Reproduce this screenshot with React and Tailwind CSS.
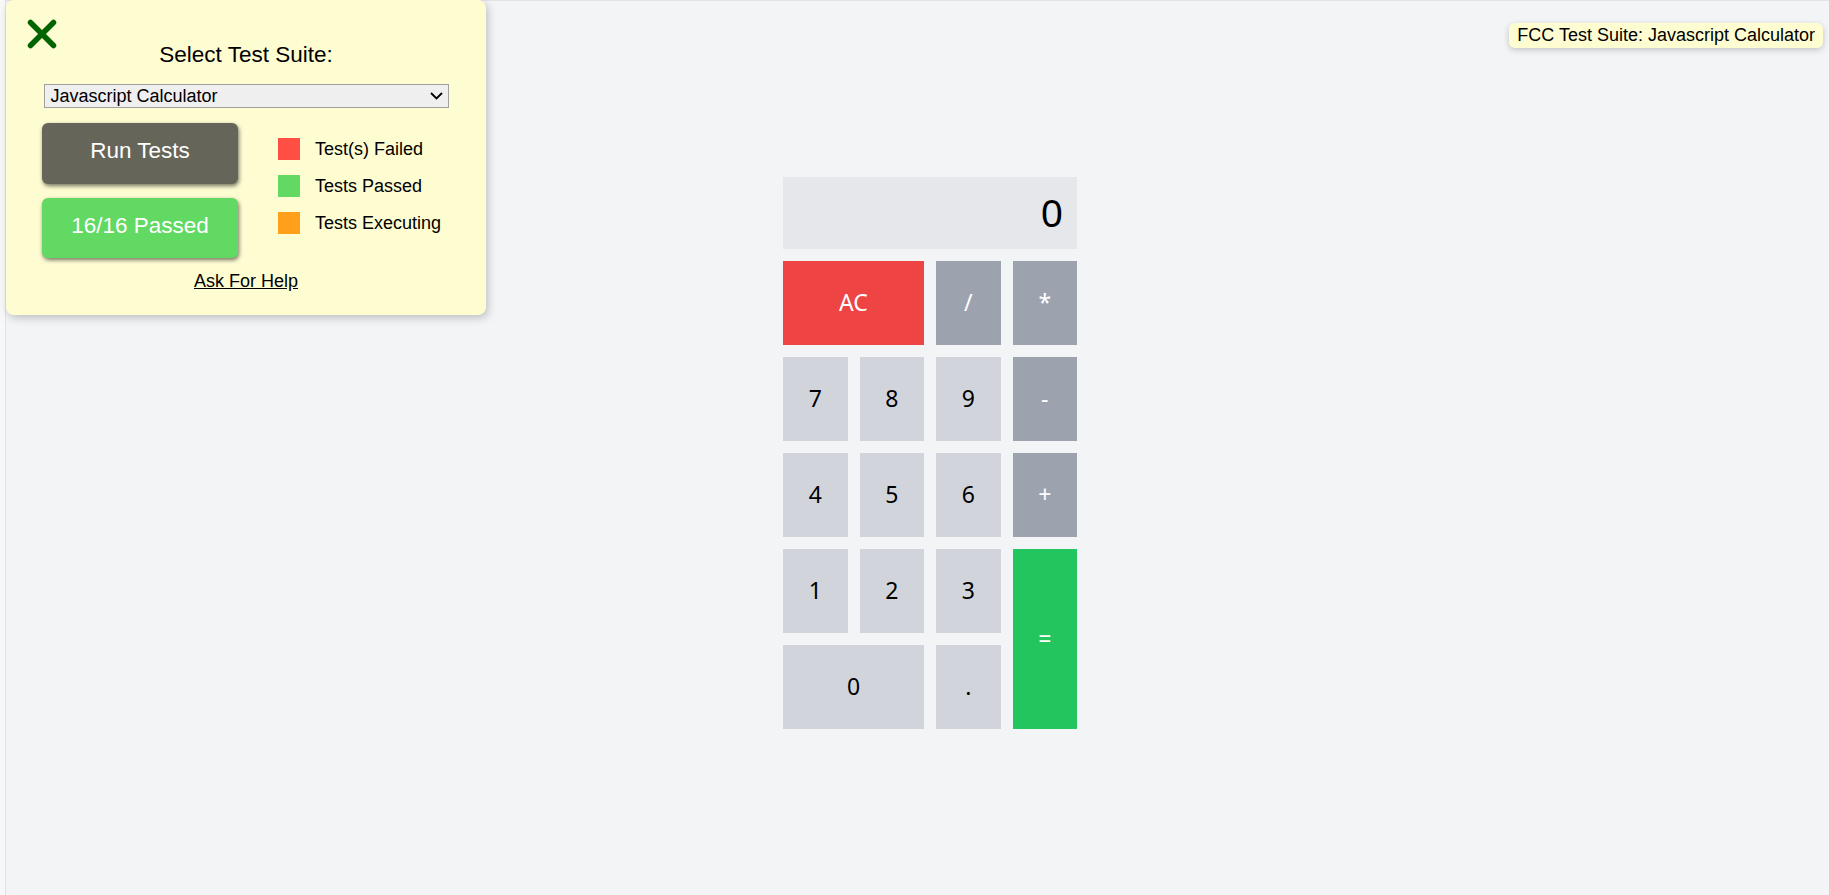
import React from 'react';

const ARIAL = { fontFamily: '"Liberation Sans", Arial, sans-serif' };

const KEYS = [
  { id: 'clear', label: 'AC', className: 'col-span-2 bg-[#ef4444] text-white' },
  { id: 'divide', label: '/', className: 'bg-[#9ca3af] text-white' },
  { id: 'multiply', label: '*', className: 'bg-[#9ca3af] text-white' },
  { id: 'seven', label: '7', className: 'bg-[#d1d5db] text-black' },
  { id: 'eight', label: '8', className: 'bg-[#d1d5db] text-black' },
  { id: 'nine', label: '9', className: 'bg-[#d1d5db] text-black' },
  { id: 'subtract', label: '-', className: 'bg-[#9ca3af] text-white' },
  { id: 'four', label: '4', className: 'bg-[#d1d5db] text-black' },
  { id: 'five', label: '5', className: 'bg-[#d1d5db] text-black' },
  { id: 'six', label: '6', className: 'bg-[#d1d5db] text-black' },
  { id: 'add', label: '+', className: 'bg-[#9ca3af] text-white' },
  { id: 'one', label: '1', className: 'bg-[#d1d5db] text-black' },
  { id: 'two', label: '2', className: 'bg-[#d1d5db] text-black' },
  { id: 'three', label: '3', className: 'bg-[#d1d5db] text-black' },
  { id: 'equals', label: '=', className: 'row-span-2 bg-[#22c55e] text-white' },
  { id: 'zero', label: '0', className: 'col-span-2 bg-[#d1d5db] text-black' },
  { id: 'decimal', label: '.', className: 'bg-[#d1d5db] text-black' },
];

const LEGEND = [
  { label: 'Test(s) Failed', color: 'bg-[#ff4f45]' },
  { label: 'Tests Passed', color: 'bg-[#61d962]' },
  { label: 'Tests Executing', color: 'bg-[#ffa01a]' },
];

function Calculator() {
  return (
    <div className="w-[294px]" style={{ fontFamily: '"Noto Sans", "Open Sans", sans-serif' }}>
      <div
        id="display"
        className="flex h-[72px] items-center justify-end bg-[#e5e7eb] pr-[14px] text-[39px] text-black"
      >
        0
      </div>
      <div className="mt-3 grid grid-cols-4 auto-rows-[84px] gap-3">
        {KEYS.map((key) => (
          <button
            key={key.id}
            id={key.id}
            className={[
              'flex items-center justify-center text-[23px]',
              key.className,
            ].join(' ')}
          >
            {key.label}
          </button>
        ))}
      </div>
    </div>
  );
}

function TestPanel() {
  return (
    <div
      className="absolute left-[6px] top-0 h-[315px] w-[480px] rounded-lg bg-[#fefdd2] shadow-[2px_3px_8px_rgba(0,0,0,0.22)]"
      style={ARIAL}
    >
      <svg
        className="absolute left-[20px] top-[18px]"
        width="32"
        height="32"
        viewBox="0 0 32 32"
      >
        <path
          d="M4.5 4.5 L27.5 27.5 M27.5 4.5 L4.5 27.5"
          stroke="#006400"
          strokeWidth="5.5"
          strokeLinecap="round"
        />
      </svg>

      <div className="pt-[42px]">
        <p className="text-center text-[22.5px] leading-[26px] text-black">
          Select Test Suite:
        </p>
        <div className="mx-auto mt-[16px] flex h-[24px] w-[405px] items-center justify-between border border-[#a0a0a0] bg-[#efefef] pl-[6px] pr-[5px] text-[18px] leading-[20px] text-black">
          <span>Javascript Calculator</span>
          <svg width="13" height="8" viewBox="0 0 13 8">
            <path d="M1 1 L6.5 6.5 L12 1" fill="none" stroke="#000" strokeWidth="1.8" />
          </svg>
        </div>

        <div className="mt-[15px] flex pl-[36px]">
          <div className="flex flex-col gap-[14px]">
            <button className="h-[61px] w-[196px] rounded-md bg-[#66655a] pb-[5px] text-[22.5px] text-white shadow-[1px_2px_4px_rgba(0,0,0,0.55)]">
              Run Tests
            </button>
            <button className="h-[60px] w-[196px] rounded-md bg-[#61d962] pb-[5px] text-[22.5px] text-white shadow-[1px_2px_4px_rgba(0,0,0,0.55)]">
              16/16 Passed
            </button>
          </div>
          <div className="ml-[40px] mt-[15px] flex flex-col gap-[15px]">
            {LEGEND.map((item) => (
              <div key={item.label} className="flex h-[22px] items-center gap-[15px]">
                <span className={['h-[22px] w-[22px]', item.color].join(' ')} />
                <span className="text-[18px] text-black">{item.label}</span>
              </div>
            ))}
          </div>
        </div>

        <p className="mt-[13px] text-center text-[18px] leading-[20px] text-black">
          <a href="#help" className="underline">
            Ask For Help
          </a>
        </p>
      </div>
    </div>
  );
}

export default function App() {
  return (
    <div className="relative min-h-screen bg-[#f8f8f8] pl-[5px]">
      <div className="flex min-h-screen items-center justify-center border-l border-t border-[#e3e3e3] bg-[#f3f4f6] pl-[25px] pt-[9px]">
        <Calculator />
      </div>

      <TestPanel />

      <div
        className="absolute right-[6px] top-[23px] flex h-[25px] items-center rounded-md bg-[#fefdd2] px-[8px] text-[18px] text-black shadow-[0_2px_6px_rgba(0,0,0,0.2)]"
        style={ARIAL}
      >
        FCC Test Suite: Javascript Calculator
      </div>
    </div>
  );
}
